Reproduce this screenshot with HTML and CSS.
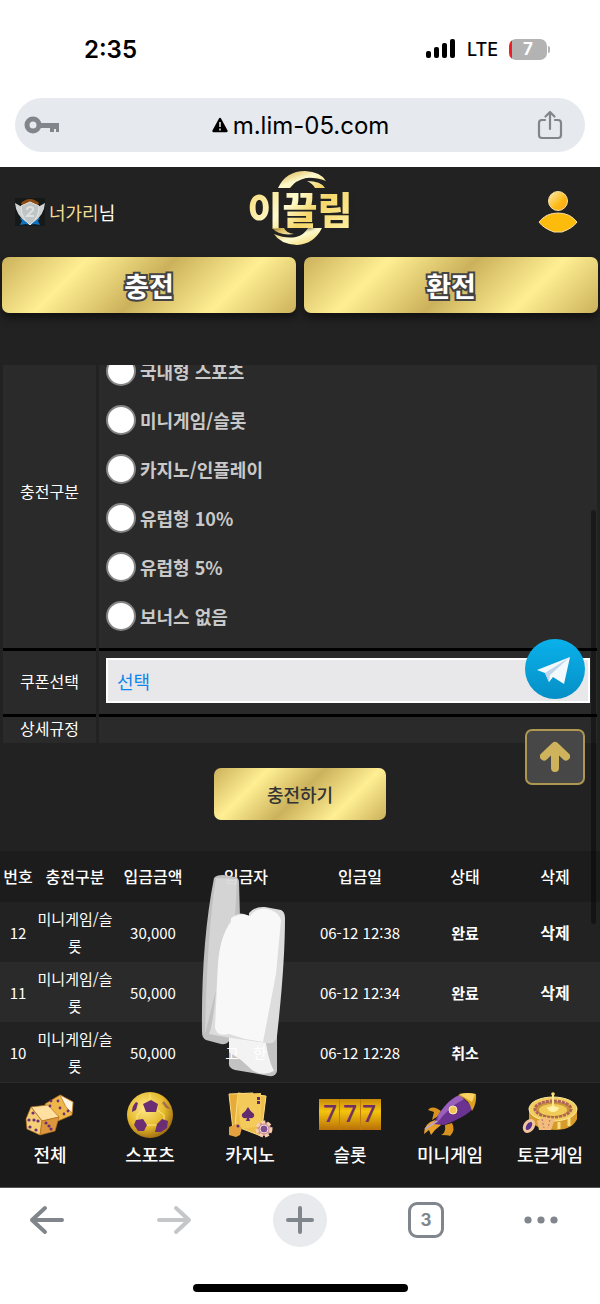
FILE: index.html
```
<!DOCTYPE html>
<html lang="ko">
<head>
    <meta charset="UTF-8">
    <meta name="viewport" content="width=device-width, initial-scale=1.0">
    <title>이끌림 - 충전</title>
    <link rel="stylesheet" href="styles.css">
</head>
<body>
    <!-- phone status bar -->
    <div class="status-bar">
        <span class="time">2:35</span>
        <div class="status-right">
            <svg width="30" height="20" viewBox="0 0 30 20">
                <rect x="0" y="12" width="5" height="7" rx="2"/>
                <rect x="8" y="8" width="5" height="11" rx="2"/>
                <rect x="16" y="4" width="5" height="15" rx="2"/>
                <rect x="24" y="0" width="5" height="19" rx="2"/>
            </svg>
            <span class="network">LTE</span>
            <div class="battery"><span>7</span></div>
        </div>
    </div>

    <div class="address-bar">
        <svg class="key" width="36" height="20" viewBox="0 0 36 20">
            <circle cx="9" cy="10" r="6" fill="none" stroke="#80868b" stroke-width="5"/>
            <path d="M16 8h19v9h-3v-3h-2v3h-4v-4h-10z" fill="#80868b"/>
        </svg>
        <div class="address">
            <svg width="16" height="16" viewBox="0 0 16 16">
                <path d="M8 2 14.500 14H1.500z" stroke="#000" stroke-width="2.400" stroke-linejoin="round"/>
                <path d="M8 5v5M8 11.500v2" stroke="#fff" stroke-width="1.400"/>
            </svg>
            <span>m.lim-05.com</span>
        </div>
        <button class="share" aria-label="공유">
            <svg width="26" height="30" viewBox="0 0 26 30" fill="none" stroke="#80868b" stroke-width="2.2" stroke-linecap="round" stroke-linejoin="round">
                <path d="M8 10H5a3 3 0 0 0-3 3v12a3 3 0 0 0 3 3h16a3 3 0 0 0 3-3V13a3 3 0 0 0-3-3h-3M13 19V2M8.500 6.500 13 2l4.500 4.500"/>
            </svg>
        </button>
    </div>

    <main class="site">
        <header class="site-header">
            <div class="user">
                <svg width="30" height="28" viewBox="0 0 30 28">
                    <rect width="30" height="28" fill="#151a18"/>
                    <path d="M6 5Q15-3 24 5L22 9H8z" fill="#8a4a12"/>
                    <path d="M5 20l6 1 4 3 4-3 6-1-2 3 2 4-6-1-4 1-4-1-6 1 2-4z" fill="#1172bd"/>
                    <path d="M0 5l7 4 4 15Q1 17 0 5zM30 5l-7 4-4 15Q29 17 30 5z" fill="#ced3d4"/>
                    <path d="M15 4l9 4q0 12-9 19Q6 20 6 8z" fill="#bfc4c4" stroke="#e4e6e5"/>
                    <path d="M12 12q0-3 3-3 4 0 3 3l-6 6h7" fill="none" stroke="#dde1e0" stroke-width="2"/>
                </svg>
                <span><b>너가리</b>님</span>
            </div>
            <a class="logo" href="#">
                <svg width="64" height="76" viewBox="0 0 64 76">
                    <defs>
                        <linearGradient id="swoosh" x1="0" y1="0" x2="1" y2="1">
                            <stop offset="0" stop-color="#d4a834"/>
                            <stop offset=".5" stop-color="#fffbd0"/>
                            <stop offset="1" stop-color="#f1cf56"/>
                        </linearGradient>
                    </defs>
                    <path d="M10 18Q18 1 37 1 53 2 58 11 47 7 38 8 28 10 22 18zM39 11q14 0 18 7H47q-2-4-8-7z" fill="url(#swoosh)"/>
                    <path d="M54 58Q46 74 29 75 12 74 6 64q12 5 22 3 8-2 12-9zM4 58h12q2 5 10 6-15 2-22-6z" fill="url(#swoosh)"/>
                </svg>
                <span>이끌림</span>
            </a>
            <a class="my-page" href="#" aria-label="내 정보">
                <svg width="40" height="44" viewBox="0 0 40 44">
                    <defs>
                        <linearGradient id="person" x1="0" y1="0" x2="1" y2="1">
                            <stop offset="0" stop-color="#ffefb8"/>
                            <stop offset=".6" stop-color="#fdb813"/>
                            <stop offset="1" stop-color="#f5a623"/>
                        </linearGradient>
                    </defs>
                    <circle cx="20" cy="11" r="9.500" fill="url(#person)" stroke="#f9dfa0"/>
                    <path d="M1 32Q8 23 20 23t19 9q-4 6-15 10h-8Q5 38 1 32z" fill="#fdbb0c" stroke="#f9dfa0"/>
                </svg>
            </a>
        </header>

        <div class="main-buttons">
            <button class="gold big">충전</button>
            <button class="gold big">환전</button>
        </div>

        <form class="charge-form">
            <div class="form-panel">
                <div class="form-row">
                    <div class="form-label" id="bonus-label">충전구분</div>
                    <div class="form-field options" role="radiogroup" aria-labelledby="bonus-label">
                        <label><input type="radio" name="bonus">국내형 스포츠</label>
                        <label><input type="radio" name="bonus">미니게임/슬롯</label>
                        <label><input type="radio" name="bonus">카지노/인플레이</label>
                        <label><input type="radio" name="bonus">유럽형 10%</label>
                        <label><input type="radio" name="bonus">유럽형 5%</label>
                        <label><input type="radio" name="bonus">보너스 없음</label>
                    </div>
                </div>
                <div class="form-row">
                    <label class="form-label" for="coupon">쿠폰선택</label>
                    <div class="form-field coupon">
                        <select id="coupon">
                            <option>선택</option>
                        </select>
                    </div>
                </div>
                <div class="form-row">
                    <div class="form-label">상세규정</div>
                    <div class="form-field"></div>
                </div>
            </div>
            <button class="gold submit" type="button">충전하기</button>
        </form>

        <div class="history">
            <table>
                <colgroup>
                    <col class="w-no"><col class="w-type"><col class="w-type"><col class="w-name"><col class="w-date"><col class="w-state"><col class="w-state">
                </colgroup>
                <thead>
                    <tr><th>번호</th><th>충전구분</th><th>입금금액</th><th>입금자</th><th>입금일</th><th>상태</th><th>삭제</th></tr>
                </thead>
                <tbody>
                    <tr><td>12</td><td>미니게임/슬롯</td><td>30,000</td><td></td><td>06-12 12:38</td><td><b>완료</b></td><td><a href="#">삭제</a></td></tr>
                    <tr><td>11</td><td>미니게임/슬롯</td><td>50,000</td><td></td><td>06-12 12:34</td><td><b>완료</b></td><td><a href="#">삭제</a></td></tr>
                    <tr><td>10</td><td>미니게임/슬롯</td><td>50,000</td><td class="masked"><span>고</span><span>한</span></td><td>06-12 12:28</td><td><b>취소</b></td><td></td></tr>
                </tbody>
            </table>
            <!-- marker over the depositor names -->
            <svg class="marker" width="86" height="204" viewBox="0 0 86 204">
                <path d="M13 4Q15 1 22 1L34 3Q38 4 38 8L39 44Q30 60 29 90V164Q28 171 20 170L5 166Q1 164 1 158 0 70 13 4z" fill="#c6c6c6"/>
                <path d="M15 4 36 5 34 45Q24 60 19 100L4 160Q6 60 15 4z" fill="#fff" opacity=".35"/>
                <path d="M28 160H76V197Q75 203 68 202L52 199 34 196Q27 194 28 188z" fill="#c9c9c9"/>
                <path d="M28 160H64Q66 184 73 197 62 203 51 196L40 186 28 178z" fill="#fff" opacity=".9"/>
                <path d="M48 39Q54 32 64 33L80 36Q84 38 84 44 84 90 76 162 74 171 66 169L30 164 8 160Q13 150 17 90 20 60 32 42 40 37 48 42z" fill="#e3e3e3"/>
                <path d="M30 44Q40 38 49 42 56 33 66 35 77 37 80 46L75 100 62 168 44 165 28 160Q15 163 14 153L17 90Q19 62 30 48z" fill="#fff"/>
            </svg>
        </div>

        <nav class="bottom-nav">
            <a href="#">
                <svg width="52" height="46" viewBox="0 0 52 46">
                    <g stroke="#b87320" stroke-width=".7" stroke-linejoin="round">
                        <path d="M21 12 36 3 49 10 48 23 34 29 25 24z" fill="#efb74a"/>
                        <path d="M36 3 49 10 48 21 42 15z" fill="#fff5df"/>
                        <path d="M7 15 24 13 35 25 18 29z" fill="#ffe0a0"/>
                        <path d="M7 15 18 29 16 43 3 37 2 27z" fill="#f5cf77"/>
                        <path d="M18 29 35 25 31 39 16 43z" fill="#dc963d"/>
                    </g>
                    <g fill="#703073">
                        <circle cx="9" cy="21" r="1.600"/><circle cx="5" cy="28" r="1.600"/><circle cx="10" cy="28" r="1.600"/><circle cx="14" cy="29" r="1.600"/><circle cx="6" cy="35" r="1.600"/><circle cx="12" cy="38" r="1.600"/>
                        <circle cx="22" cy="31" r="1.600"/><circle cx="25" cy="34" r="1.600"/><circle cx="27" cy="37" r="1.600"/><circle cx="26" cy="14" r="1.400"/><circle cx="34" cy="9" r="1.400"/><circle cx="27" cy="9" r="1.400"/><circle cx="36" cy="16" r="1.400"/><circle cx="40" cy="22" r="1.400"/><circle cx="44" cy="19" r="1.400"/>
                    </g>
                </svg>
                <span>전체</span>
            </a>
            <a href="#">
                <svg width="48" height="46" viewBox="0 0 48 46">
                    <defs>
                        <radialGradient id="ball" cx=".4" cy=".35" r=".7">
                            <stop offset="0" stop-color="#ffe989"/>
                            <stop offset=".6" stop-color="#e5b92c"/>
                            <stop offset="1" stop-color="#9a6510"/>
                        </radialGradient>
                    </defs>
                    <circle cx="24" cy="23" r="23" fill="url(#ball)"/>
                    <path d="M24 8V2M17 18l-6 5v7M31 18l7 5v7M17 33l14 0" fill="none" stroke="#ffe77e" stroke-width="1"/>
                    <g fill="#6b2e72">
                        <path d="M25 8l7 4-2 8H20l-3-8z"/>
                        <path d="M10 28l7-1 4 6-3 6h-6L8 33z"/>
                        <path d="M31 32l5-5 6 2-1 7-6 4h-6z"/>
                        <path d="M10 10l2 1-2 7-4 2q0-6 4-10z"/>
                        <path d="M38 9l6 8-4-1-4-5z" opacity=".5"/>
                    </g>
                </svg>
                <span>스포츠</span>
            </a>
            <a href="#">
                <svg width="46" height="46" viewBox="0 0 46 46">
                    <path d="M2 2 26 1 28 33 6 38z" fill="#e7ac37" stroke="#ffda7d"/>
                    <path d="M11 1 39 4 34 44 8 34z" fill="#ecc04a" stroke="#ffe08a"/>
                    <path d="M10 2 34 1 34 34 14 37z" fill="#f4ca5a"/>
                    <path d="M21 15q2 4 6 7 1 5-5 4l1 3h-4l1-3q-6 1-5-4 4-3 6-7z" fill="#632c70"/>
                    <rect x="30" y="5" width="3" height="3" fill="#632c70"/>
                    <rect x="30" y="9" width="3" height="3" fill="#632c70"/>
                    <path d="M2 35 9 32 15 36 13 43 9 45 2 43z" fill="#e4a13f"/>
                    <circle cx="11" cy="34" r="1.500" fill="#632c70"/>
                    <circle cx="37" cy="37" r="7" fill="#c98f9a" stroke="#f6cfaf" stroke-width="3" stroke-dasharray="4 2"/>
                    <circle cx="37" cy="37" r="4" fill="#7d4f96" stroke="#f8dfca"/>
                </svg>
                <span>카지노</span>
            </a>
            <a href="#">
                <svg width="62" height="46" viewBox="0 0 62 46">
                    <defs>
                        <linearGradient id="slot" x1="0" y1="0" x2="0" y2="1">
                            <stop offset="0" stop-color="#c98a0b"/>
                            <stop offset=".4" stop-color="#f4c40d"/>
                            <stop offset="1" stop-color="#b96f08"/>
                        </linearGradient>
                    </defs>
                    <rect y="7" width="62" height="31" fill="url(#slot)"/>
                    <path d="M20.500 7v31M41.500 7v31" stroke="#c07c0d"/>
                    <g class="sevens">
                        <text x="11" y="30">7</text>
                        <text x="31" y="30">7</text>
                        <text x="50" y="30">7</text>
                    </g>
                </svg>
                <span>슬롯</span>
            </a>
            <a href="#">
                <svg width="54" height="46" viewBox="0 0 54 46">
                    <path d="M20 21Q10 12 5 18l6 2-2 8z" fill="#d8921d"/>
                    <path d="M29 31q4 7-2 13-2-1-9-1 5-2 4-10z" fill="#d8921d"/>
                    <path d="M12 28Q1 31 1 42l5-4 2 5 4-5 6-5z" fill="#e6a12d"/>
                    <path d="M10 32 15 23Q27 5 37 3L50 16Q45 24 21 33z" fill="#6b3292"/>
                    <path d="M15 23Q27 6 37 3L41 7Q26 15 14 31z" fill="#9a61bb"/>
                    <path d="M35 3Q44 0 53 2 54 11 49 19 47 8 35 3z" fill="#dca020"/>
                    <path d="M36 2Q45 0 52 2L49 10z" fill="#f9d463"/>
                    <circle cx="30" cy="18" r="4" fill="#f2c65c" stroke="#fff0a5"/>
                    <path d="M14 29 2 37" stroke="#bda6c5" stroke-width="2"/>
                </svg>
                <span>미니게임</span>
            </a>
            <a href="#">
                <svg width="56" height="46" viewBox="0 0 56 46">
                    <path d="M7 16V28Q14 38 35 38 51 37 55 27V16z" fill="#d79b2b"/>
                    <path d="M37 37V30M47 34V26" stroke="#f8df82" stroke-width="3"/>
                    <ellipse cx="31" cy="17" rx="24" ry="12" fill="#f2cd60" stroke="#ffe998"/>
                    <ellipse cx="31" cy="17" rx="18" ry="8" fill="#c9953a" stroke="#b0655a" stroke-width="3" stroke-dasharray="3 1"/>
                    <ellipse cx="31" cy="18" rx="14" ry="6" fill="#f0cb58"/>
                    <path d="M31 2v14M25 16h12" stroke="#ffe68b" stroke-width="2"/>
                    <circle cx="31" cy="2" r="1.800" fill="#ffdf72"/>
                    <ellipse cx="31" cy="17" rx="5" ry="3" fill="#fff0a6"/>
                    <path d="M15 29 22 25 33 27 29 38 17 38z" fill="#f2bd7b"/>
                    <path d="M20 27 22 36M28 28 26 36" stroke="#b76970" stroke-dasharray="2 2"/>
                    <ellipse cx="7" cy="34" rx="4" ry="6" transform="rotate(35 7 34)" fill="#58318c" stroke="#f3c49d" stroke-width="3"/>
                </svg>
                <span>토큰게임</span>
            </a>
        </nav>

        <div class="floating">
            <a class="telegram" href="#" aria-label="텔레그램">
                <svg width="60" height="60" viewBox="0 0 60 60">
                    <defs>
                        <linearGradient id="tg" x1="0" y1="0" x2="0" y2="1">
                            <stop offset="0" stop-color="#0ab1eb"/>
                            <stop offset="1" stop-color="#068fc6"/>
                        </linearGradient>
                    </defs>
                    <circle cx="30" cy="30" r="30" fill="url(#tg)"/>
                    <path d="M12 31 45 18 39 45 28 38 24 43 20 34z" fill="#f4f9fe"/>
                    <path d="M20 34 45 18 25 36 24 43z" fill="#bfd5ea"/>
                </svg>
            </a>
            <button class="to-top" type="button" aria-label="맨 위로">
                <svg width="30" height="32" viewBox="0 0 30 32" fill="none" stroke="#ceb35c" stroke-width="8" stroke-linecap="round" stroke-linejoin="round">
                    <path d="M15 27V6M4 15.500 15 5 26 15.500"/>
                </svg>
            </button>
        </div>
        <div class="scrollbar"></div>
    </main>

    <!-- browser toolbar -->
    <footer class="toolbar">
        <div class="tools">
            <button class="back" aria-label="뒤로">
                <svg width="36" height="34" viewBox="0 0 36 34" fill="none" stroke="#80868b" stroke-width="4" stroke-linecap="round" stroke-linejoin="round"><path d="M33 17H3M16 5 3 17l13 12"/></svg>
            </button>
            <button aria-label="앞으로">
                <svg width="36" height="34" viewBox="0 0 36 34" fill="none" stroke="#c5c6c7" stroke-width="4" stroke-linecap="round" stroke-linejoin="round"><path d="M3 17h30M20 5l13 12-13 12"/></svg>
            </button>
            <button class="new-tab" aria-label="새 탭">
                <svg width="28" height="28" viewBox="0 0 28 28" stroke="#80868b" stroke-width="4" stroke-linecap="round"><path d="M14 2v24M2 14h24"/></svg>
            </button>
            <button class="tabs">3</button>
            <button class="menu" aria-label="메뉴">
                <svg width="34" height="8" viewBox="0 0 34 8" fill="#80868b"><circle cx="4" cy="4" r="3.600"/><circle cx="17" cy="4" r="3.600"/><circle cx="30" cy="4" r="3.600"/></svg>
            </button>
        </div>
        <div class="home-bar"></div>
    </footer>
</body>
</html>
```
FILE: styles.css
```
* {
    box-sizing: border-box;
}

body {
    margin: 0;
    min-height: 100vh;
    background: #fff;
    color: #fff;
    font-family: "Noto Sans CJK KR", sans-serif;
    font-size: 16px;
}

button {
    padding: 0;
    border: none;
    background: none;
    font-family: inherit;
    cursor: pointer;
}

a {
    color: inherit;
    text-decoration: none;
}

svg {
    display: block;
}

/* status bar */
.status-bar {
    display: flex;
    align-items: center;
    justify-content: space-between;
    height: 98px;
    padding: 0 53px 0 84px;
    color: #000;
    font-family: Inter, sans-serif;
}

.time {
    font-size: 24px;
    font-weight: 600;
}

.status-right {
    display: flex;
    align-items: center;
    gap: 11px;
}

.network {
    font-size: 18px;
    font-weight: 500;
}

.battery {
    position: relative;
    width: 38px;
    height: 21px;
    border-radius: 7px;
    background: linear-gradient(90deg, #f01d25 3px, #b3b3b3 3px);
    color: #fff;
    font-size: 17px;
    font-weight: 700;
    line-height: 21px;
    text-align: center;
}

.battery::after {
    content: "";
    position: absolute;
    top: 7px;
    right: -3px;
    width: 2px;
    height: 7px;
    border-radius: 0 2px 2px 0;
    background: #b3b3b3;
}

/* address bar */
.address-bar {
    display: flex;
    align-items: center;
    justify-content: space-between;
    height: 54px;
    margin: 0 15px 15px;
    padding: 0 22px 0 9px;
    border-radius: 27px;
    background: #e6e9ee;
    color: #000;
}

.address {
    display: flex;
    align-items: center;
    gap: 5px;
    padding-left: 4px;
    font-family: Inter, sans-serif;
    font-size: 24px;
}

/* site */
.site {
    position: relative;
    background: #222;
}

.site-header {
    display: grid;
    grid-template-columns: 1fr auto 1fr;
    align-items: center;
    height: 90px;
    padding: 0 15px;
}

.user {
    display: flex;
    align-items: center;
    gap: 4px;
    font-size: 18px;
}

.user b {
    color: #f3dc94;
    font-weight: 400;
}

.logo {
    display: grid;
    place-items: center;
    margin-bottom: 8px;
}

.logo svg,
.logo span {
    grid-area: 1 / 1;
}

.logo span {
    background: linear-gradient(135deg, #f5d668, #fffbd0 40%, #f5d668 60%, #fff3a8);
    -webkit-background-clip: text;
    background-clip: text;
    color: transparent;
    font-size: 38px;
    font-weight: 900;
    line-height: 48px;
    filter: drop-shadow(0 0 2px #222);
}

.my-page {
    justify-self: end;
    margin-right: 7px;
}

.main-buttons {
    display: grid;
    grid-template-columns: 1fr 1fr;
    gap: 8px;
    padding: 0 2px;
}

.gold {
    border-radius: 7px;
    background: linear-gradient(135deg, #cbb15b, #ffef93 25%, #cbb15b 50%, #ffef93 75%, #cbb15b);
    color: #333;
}

.big {
    height: 56px;
    color: #fff;
    font-size: 27px;
    font-weight: 700;
    -webkit-text-stroke: 4px #444;
    paint-order: stroke fill;
    box-shadow: 0 5px 8px rgba(0, 0, 0, 0.5);
}

/* charge form */
.charge-form {
    padding: 52px 3px 31px;
}

.form-panel {
    display: flex;
    flex-direction: column;
    justify-content: flex-end;
    height: 378px;
    overflow: hidden;
}

.form-row {
    display: grid;
    grid-template-columns: 93px 1fr;
    gap: 3px;
    flex-shrink: 0;
}

.form-row + .form-row .form-label,
.form-row + .form-row .form-field {
    border-top: 3px solid #000;
}

.form-label,
.form-field {
    background: #2a2a2a;
}

.form-label {
    display: flex;
    align-items: center;
    justify-content: center;
    padding-bottom: 4px;
    line-height: 22px;
}

.options {
    padding: 8px 7px;
}

.options label {
    display: flex;
    align-items: center;
    gap: 4px;
    height: 49px;
    color: #c9c9c9;
    font-size: 18px;
    font-weight: 700;
}

.options input {
    appearance: none;
    width: 30px;
    height: 30px;
    margin: 0;
    border: 2px solid #858585;
    border-radius: 50%;
    background: #fff;
}

.coupon {
    padding: 7px 7px 11px;
}

.coupon select {
    appearance: none;
    display: block;
    width: 100%;
    height: 45px;
    padding: 0 9px;
    border: 2px solid #fff;
    border-radius: 0;
    background: #e8e8ea;
    color: #0d86ee;
    font-family: inherit;
    font-size: 18px;
}

.submit {
    display: block;
    width: 172px;
    height: 52px;
    margin: 25px auto 0;
    font-size: 18px;
    font-weight: 500;
}

/* charge history */
.history {
    position: relative;
}

table {
    width: 100%;
    table-layout: fixed;
    border-collapse: collapse;
    text-align: center;
}

.w-no {
    width: 6%;
}

.w-type {
    width: 13%;
}

.w-name {
    width: 18%;
}

.w-date {
    width: 20%;
}

.w-state {
    width: 15%;
}

th,
td {
    padding: 0;
    line-height: 27px;
}

th {
    height: 51px;
    background: #1c1c1c;
    font-weight: 500;
}

td {
    height: 60px;
    font-size: 15px;
}

td a {
    font-size: 16px;
    font-weight: 700;
}

tbody tr:nth-child(even) {
    background: #2a2a2a;
}

.masked span {
    position: relative;
    z-index: 1;
}

.masked span + span {
    margin-left: 14px;
}

.marker {
    position: absolute;
    top: 23px;
    left: 33.5%;
    opacity: 0.97;
}

/* bottom nav */
.bottom-nav {
    display: grid;
    grid-template-columns: repeat(6, 1fr);
    height: 106px;
    padding-top: 9px;
    border-top: 1px solid #2a2a2a;
    border-bottom: 1px solid #555;
    background: #1a1a1a;
}

.bottom-nav a {
    display: flex;
    flex-direction: column;
    align-items: center;
    gap: 3px;
    font-size: 18px;
    font-weight: 500;
    line-height: 27px;
}

.sevens {
    fill: #713063;
    font-family: "Open Sans", sans-serif;
    font-size: 24px;
    font-weight: 600;
    text-anchor: middle;
}

/* quick buttons over the page */
.floating {
    position: absolute;
    top: 472px;
    right: 15px;
    display: flex;
    flex-direction: column;
    gap: 30px;
}

.to-top {
    display: flex;
    align-items: center;
    justify-content: center;
    width: 60px;
    height: 56px;
    border: 2px solid #ad9751;
    border-radius: 7px;
    background: #474747;
}

.scrollbar {
    position: absolute;
    top: 343px;
    right: 4px;
    width: 5px;
    height: 414px;
    border-radius: 3px;
    background: rgba(0, 0, 0, 0.4);
}

/* browser toolbar */
.toolbar {
    padding-top: 5px;
}

.tools {
    display: grid;
    grid-template-columns: 1fr 21% 21% 21% 1fr;
    align-items: center;
    justify-items: center;
    height: 54px;
}

.back {
    justify-self: start;
    margin-left: 29px;
}

.menu {
    justify-self: end;
    margin-right: 42px;
}

.new-tab {
    display: flex;
    align-items: center;
    justify-content: center;
    width: 54px;
    height: 54px;
    border-radius: 50%;
    background: #e8eaed;
}

.tabs {
    width: 36px;
    height: 36px;
    border: 3px solid #80868b;
    border-radius: 9px;
    color: #80868b;
    font-family: Inter, sans-serif;
    font-size: 17px;
    font-weight: 700;
}

.home-bar {
    width: 215px;
    height: 8px;
    margin: 37px auto 12px;
    border-radius: 4px;
    background: #000;
}
```
